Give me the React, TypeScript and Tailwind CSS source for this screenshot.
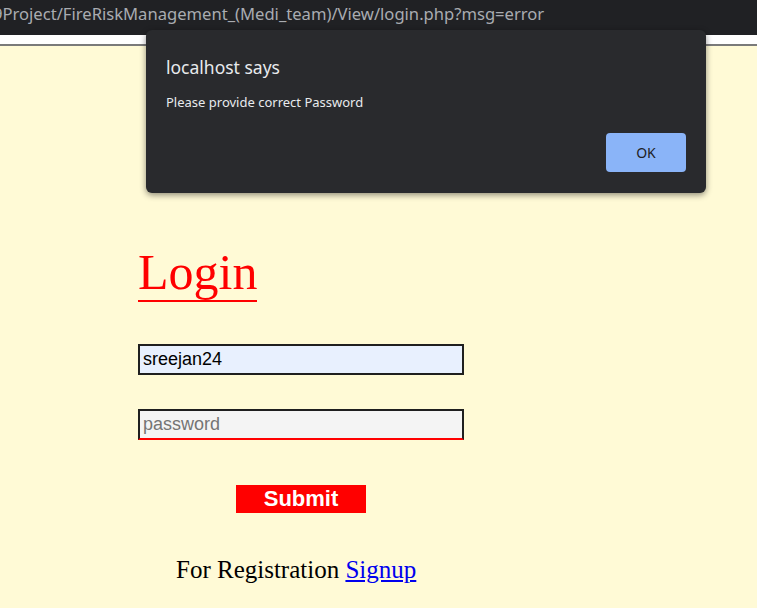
import React from 'react';

function AlertDialog(): JSX.Element {
  return (
    <div className="absolute left-[146px] top-[30px] w-[560px] h-[163px] rounded-md bg-[#292a2d] shadow-[0_2px_6px_rgba(0,0,0,0.45)] font-['Noto_Sans',sans-serif]">
      <div className="pl-5 pt-[25px] text-[17.5px] leading-[24px] text-[#e8eaed]">localhost says</div>
      <div className="pl-5 pt-[13px] text-[13px] leading-[20px] text-[#e8eaed]">
        Please provide correct Password
      </div>
      <div className="flex justify-end pr-5 pt-[21px]">
        <button className="w-[80px] h-[39px] rounded bg-[#8ab4f8] text-[14px] text-[#202124]">OK</button>
      </div>
    </div>
  );
}

function App(): JSX.Element {
  return (
    <div className="relative min-h-[608px] overflow-hidden bg-[#fffad6]">
      <div className="h-[35px] bg-[#202124] overflow-hidden whitespace-nowrap">
        <div className="-ml-[7px] pt-[3px] text-[16.6px] leading-[22px] text-[#a9acb1] font-['Noto_Sans',sans-serif]">
          9Project/FireRiskManagement_(Medi_team)/View/login.php?msg=error
        </div>
      </div>
      <div className="h-[11px] bg-white border-b-2 border-[#7a7a7a]" />

      <main className="ml-[138px] w-[326px] flex flex-col font-['Liberation_Serif',serif]">
        <div className="mt-[198px]">
          <h1 className="inline-block text-[50px] leading-[56px] text-[#ff0000] border-b-2 border-[#ff0000]">
            Login
          </h1>
        </div>
        <form className="flex flex-col">
          <input
            type="text"
            defaultValue="sreejan24"
            className="mt-[42px] h-[31px] w-[326px] border-2 border-[#1f1f1f] bg-[#e8f0fe] pl-[3px] text-[18px] text-black font-['Liberation_Sans',sans-serif] outline-none"
          />
          <input
            type="password"
            placeholder="password"
            className="mt-[34px] h-[31px] w-[326px] border-2 border-[#1f1f1f] border-b-[#ff0000] bg-[#f4f4f4] pl-[3px] text-[18px] text-black placeholder:text-[#757575] font-['Liberation_Sans',sans-serif] outline-none"
          />
          <div className="mt-[45px] ml-[98px]">
            <button
              type="button"
              className="w-[130px] h-[28px] bg-[#ff0000] text-white font-bold text-[22px] leading-[28px] font-['Liberation_Sans',sans-serif]"
            >
              Submit
            </button>
          </div>
        </form>
        <div className="mt-[42px] ml-[38px] text-[25px] leading-[29px] text-black whitespace-nowrap">
          For Registration{' '}
          <a href="#" className="text-[#0000ee] underline">
            Signup
          </a>
        </div>
      </main>

      <AlertDialog />
    </div>
  );
}

export default App;
